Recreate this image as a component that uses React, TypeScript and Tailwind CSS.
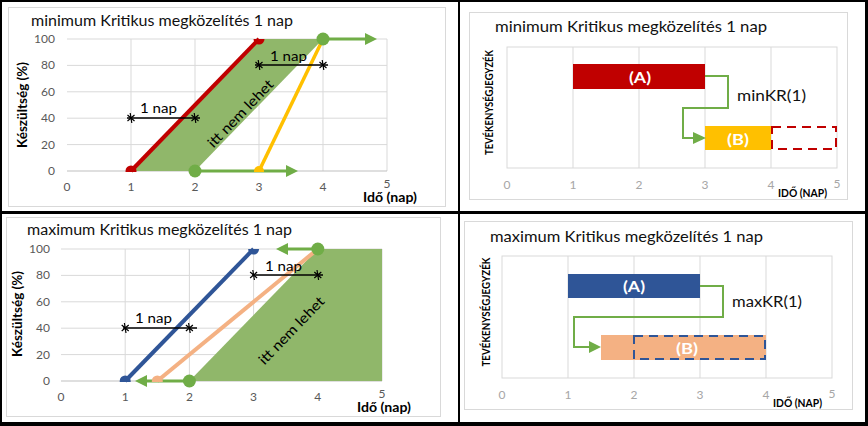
type Scale = { x0: number; ux: number; y0: number; y100: number };

const GREEN = "#70AD47";
const GREEN_FILL = "#90B76A";
const GRID = "#d9d9d9";

const sx = (s: Scale, v: number) => s.x0 + s.ux * v;
const sy = (s: Scale, p: number) => s.y0 - ((s.y0 - s.y100) * p) / 100;

function LineGrid({ s, labelX, labelY }: { s: Scale; labelX: number; labelY: number }) {
  return (
    <g>
      {[20, 40, 60, 80, 100].map((p) => (
        <line key={p} x1={sx(s, 0)} x2={sx(s, 5)} y1={sy(s, p)} y2={sy(s, p)} stroke={GRID} />
      ))}
      {[1, 2, 3, 4, 5].map((v) => (
        <line key={v} x1={sx(s, v)} x2={sx(s, v)} y1={s.y100} y2={s.y0} stroke={GRID} />
      ))}
      <line x1={sx(s, 0)} x2={sx(s, 5)} y1={s.y0} y2={s.y0} stroke="#bfbfbf" />
      {[0, 20, 40, 60, 80, 100].map((p) => (
        <text key={p} x={labelX} y={sy(s, p) + 4} textAnchor="end" fontSize={12} fill="#595959">
          {p}
        </text>
      ))}
      {[0, 1, 2, 3, 4, 5].map((v) => (
        <text key={v} x={sx(s, v)} y={v === 5 ? labelY - 3 : labelY} textAnchor="middle" fontSize={12} fill="#595959">
          {v}
        </text>
      ))}
    </g>
  );
}

function Arrow({ x1, x2, y }: { x1: number; x2: number; y: number }) {
  const dir = Math.sign(x2 - x1);
  const base = x2 - dir * 12;
  return (
    <g>
      <line x1={x1} x2={base} y1={y} y2={y} stroke={GREEN} strokeWidth={3} />
      <polygon points={`${base},${y - 6} ${x2},${y} ${base},${y + 6}`} fill={GREEN} />
    </g>
  );
}

function Star({ x, y }: { x: number; y: number }) {
  return (
    <path
      d={`M${x - 0.8} ${y - 5}L${x + 0.8} ${y + 5}M${x - 3.5} ${y - 3}L${x + 3.5} ${y + 3}M${x + 3.5} ${y - 3}L${x - 3.5} ${y + 3}`}
      stroke="#000"
      strokeWidth={1.2}
      fill="none"
    />
  );
}

function Span({ x1, x2, a, b, y, tx, ty }: { x1: number; x2: number; a: number; b: number; y: number; tx: number; ty: number }) {
  return (
    <g>
      <line x1={x1} x2={x2} y1={y} y2={y} stroke="#000" strokeWidth={1.3} />
      <Star x={a} y={y} />
      <Star x={b} y={y} />
      <text x={tx} y={ty} fontSize={14} textLength={37} lengthAdjust="spacingAndGlyphs" fill="#000">
        1 nap
      </text>
    </g>
  );
}

function GanttGrid({ x0, top, bottom, labelY }: { x0: number; top: number; bottom: number; labelY: number }) {
  return (
    <g>
      <rect x={x0} y={top} width={330} height={bottom - top} fill="none" stroke={GRID} />
      {[1, 2, 3, 4].map((v) => (
        <line key={v} x1={x0 + 66 * v} x2={x0 + 66 * v} y1={top} y2={bottom} stroke={GRID} />
      ))}
      {[0, 1, 2, 3, 4, 5].map((v) => (
        <text key={v} x={x0 + 66 * v} y={v === 5 ? labelY - 1 : labelY} textAnchor="middle" fontSize={12} fill="#a6a6a6">
          {v}
        </text>
      ))}
    </g>
  );
}

function MinLine() {
  const s: Scale = { x0: 67, ux: 64, y0: 171, y100: 39 };
  return (
    <svg viewBox="9 8 436 198" className="block h-full w-full overflow-visible">
      <defs>
        <clipPath id="plotMin">
          <rect x={60} y={39} width={340} height={133} />
        </clipPath>
      </defs>
      <text x={31} y={26} fontSize={14.5} textLength={262} lengthAdjust="spacingAndGlyphs" fill="#111">
        minimum Kritikus megközelítés 1 nap
      </text>
      <LineGrid s={s} labelX={55} labelY={191} />
      <polygon points="131,171 195,171 323,39 259,39" fill={GREEN_FILL} />
      <line x1={131} y1={171} x2={259} y2={39} stroke="#C00000" strokeWidth={4} />
      <line x1={259} y1={171} x2={323} y2={39} stroke="#FFC000" strokeWidth={3.5} />
      <Arrow x1={195} x2={298} y={171} />
      <Arrow x1={323} x2={377} y={39} />
      <g clipPath="url(#plotMin)">
        <circle cx={131} cy={171} r={5.5} fill="#C00000" />
        <circle cx={259} cy={39} r={5.5} fill="#C00000" />
        <circle cx={259} cy={171} r={5} fill="#FFC000" />
      </g>
      <circle cx={195} cy={171} r={6.5} fill={GREEN} />
      <circle cx={323} cy={39} r={6.5} fill={GREEN} />
      <Span x1={127} x2={200} a={131} b={195} y={118} tx={140} ty={113} />
      <Span x1={255} x2={328} a={259} b={323} y={65} tx={270} ty={61} />
      <text transform="translate(240 113) rotate(-46)" textAnchor="middle" dominantBaseline="central" fontSize={14} textLength={88} lengthAdjust="spacingAndGlyphs" fill="#000">
        itt nem lehet
      </text>
      <text transform="translate(27 105) rotate(-90)" textAnchor="middle" fontSize={13} fontWeight={700} textLength={86} lengthAdjust="spacingAndGlyphs" fill="#000">
        Készültség (%)
      </text>
      <text x={363} y={202} fontSize={13} fontWeight={700} textLength={54} lengthAdjust="spacingAndGlyphs" fill="#000">
        Idő (nap)
      </text>
    </svg>
  );
}

function MaxLine() {
  const s: Scale = { x0: 61, ux: 64.2, y0: 381, y100: 249 };
  return (
    <svg viewBox="7 218 433 198" className="block h-full w-full overflow-visible">
      <defs>
        <clipPath id="plotMax">
          <rect x={55} y={249} width={340} height={133} />
        </clipPath>
      </defs>
      <text x={27} y={235} fontSize={14.5} textLength={265} lengthAdjust="spacingAndGlyphs" fill="#111">
        maximum Kritikus megközelítés 1 nap
      </text>
      <LineGrid s={s} labelX={50} labelY={401} />
      <polygon points="189.4,381 317.8,249 382,249 382,381" fill={GREEN_FILL} />
      <line x1={125.2} y1={381} x2={253.6} y2={249} stroke="#2F5597" strokeWidth={4} />
      <line x1={157.3} y1={381} x2={317.8} y2={249} stroke="#F4B183" strokeWidth={4} />
      <Arrow x1={189.4} x2={135} y={381} />
      <Arrow x1={317.8} x2={276} y={249} />
      <g clipPath="url(#plotMax)">
        <circle cx={125.2} cy={381} r={5.5} fill="#2F5597" />
        <circle cx={253.6} cy={249} r={5.5} fill="#2F5597" />
        <circle cx={157.3} cy={381} r={5.5} fill="#F4B183" />
      </g>
      <circle cx={189.4} cy={381} r={6.5} fill={GREEN} />
      <circle cx={317.8} cy={249} r={6.5} fill={GREEN} />
      <Span x1={123} x2={197} a={125.2} b={189.4} y={328} tx={135} ty={323} />
      <Span x1={252} x2={323} a={253.6} b={317.8} y={275} tx={265} ty={271} />
      <text transform="translate(291 330) rotate(-46)" textAnchor="middle" dominantBaseline="central" fontSize={14} textLength={88} lengthAdjust="spacingAndGlyphs" fill="#000">
        itt nem lehet
      </text>
      <text transform="translate(22 314) rotate(-90)" textAnchor="middle" fontSize={13} fontWeight={700} textLength={86} lengthAdjust="spacingAndGlyphs" fill="#000">
        Készültség (%)
      </text>
      <text x={357} y={412} fontSize={13} fontWeight={700} textLength={54} lengthAdjust="spacingAndGlyphs" fill="#000">
        Idő (nap)
      </text>
    </svg>
  );
}

function MinGantt() {
  return (
    <svg viewBox="470 13 377 186" className="block h-full w-full overflow-visible">
      <text x={495} y={32} fontSize={15} textLength={272} lengthAdjust="spacingAndGlyphs" fill="#111">
        minimum Kritikus megközelítés 1 nap
      </text>
      <GanttGrid x0={507} top={47} bottom={168} labelY={189} />
      <rect x={573} y={64} width={132} height={25} fill="#C00000" />
      <text x={640} y={76.5} textAnchor="middle" dominantBaseline="central" fontSize={16} fontWeight={700} textLength={22} lengthAdjust="spacingAndGlyphs" fill="#fff">
        (A)
      </text>
      <rect x={705} y={126} width={66} height={24} fill="#FFC000" />
      <text x={738} y={138} textAnchor="middle" dominantBaseline="central" fontSize={16} fontWeight={700} textLength={22} lengthAdjust="spacingAndGlyphs" fill="#fff">
        (B)
      </text>
      <rect x={772} y={127} width={64} height={22} fill="none" stroke="#C00000" strokeWidth={2} strokeDasharray="9 6" />
      <path d="M705 76H728V108H683V138H694" fill="none" stroke={GREEN} strokeWidth={2} />
      <polygon points="693,132 706,138 693,144" fill={GREEN} />
      <text x={737} y={101} fontSize={15.5} textLength={69} lengthAdjust="spacingAndGlyphs" fill="#111">
        minKR(1)
      </text>
      <text x={778} y={197} fontSize={10.5} fontWeight={700} textLength={49} lengthAdjust="spacingAndGlyphs" fill="#000">
        IDŐ (NAP)
      </text>
      <text transform="translate(493 102.5) rotate(-90)" textAnchor="middle" fontSize={10.5} fontWeight={700} textLength={105} lengthAdjust="spacingAndGlyphs" fill="#000">
        TEVÉKENYSÉGJEGYZÉK
      </text>
    </svg>
  );
}

function MaxGantt() {
  return (
    <svg viewBox="465 222 387 187" className="block h-full w-full overflow-visible">
      <text x={490} y={242} fontSize={15} textLength={273} lengthAdjust="spacingAndGlyphs" fill="#111">
        maximum Kritikus megközelítés 1 nap
      </text>
      <GanttGrid x0={502} top={256} bottom={378} labelY={399} />
      <rect x={568} y={274} width={132} height={24} fill="#2F5597" />
      <text x={634} y={285.5} textAnchor="middle" dominantBaseline="central" fontSize={16} fontWeight={700} textLength={22} lengthAdjust="spacingAndGlyphs" fill="#fff">
        (A)
      </text>
      <rect x={601} y={335} width={165} height={25} fill="#F4B183" />
      <text x={687} y={347} textAnchor="middle" dominantBaseline="central" fontSize={16} fontWeight={700} textLength={22} lengthAdjust="spacingAndGlyphs" fill="#fff">
        (B)
      </text>
      <rect x={634} y={336} width={131} height={23} fill="none" stroke="#2F5597" strokeWidth={2} strokeDasharray="9 6" />
      <path d="M700 286H723V317H574V347H590" fill="none" stroke={GREEN} strokeWidth={2} />
      <polygon points="589,341 601,347 589,353" fill={GREEN} />
      <text x={732} y={307} fontSize={15.5} textLength={70} lengthAdjust="spacingAndGlyphs" fill="#111">
        maxKR(1)
      </text>
      <text x={773} y={407} fontSize={10.5} fontWeight={700} textLength={49} lengthAdjust="spacingAndGlyphs" fill="#000">
        IDŐ (NAP)
      </text>
      <text transform="translate(490 312) rotate(-90)" textAnchor="middle" fontSize={10.5} fontWeight={700} textLength={109} lengthAdjust="spacingAndGlyphs" fill="#000">
        TEVÉKENYSÉGJEGYZÉK
      </text>
    </svg>
  );
}

export default function App() {
  return (
    <div className="grid h-[426px] w-[868px] grid-cols-[456px_405px] grid-rows-[209px_208px] gap-x-[2px] gap-y-[3px] bg-black pb-[4px] pl-[2px] pr-[3px] pt-[2px] font-['Lato','Liberation_Sans',sans-serif]">
      <div className="bg-white pl-[6px] pt-[5px]">
        <div className="h-[200px] w-[438px] border border-[#d9d9d9]">
          <MinLine />
        </div>
      </div>
      <div className="bg-white pl-[9px] pt-[10px]">
        <div className="h-[188px] w-[379px] border border-[#d9d9d9]">
          <MinGantt />
        </div>
      </div>
      <div className="bg-white pl-[4px] pt-[3px]">
        <div className="h-[200px] w-[435px] border border-[#d9d9d9]">
          <MaxLine />
        </div>
      </div>
      <div className="bg-white pl-[4px] pt-[7px]">
        <div className="h-[189px] w-[389px] border border-[#d9d9d9]">
          <MaxGantt />
        </div>
      </div>
    </div>
  );
}
